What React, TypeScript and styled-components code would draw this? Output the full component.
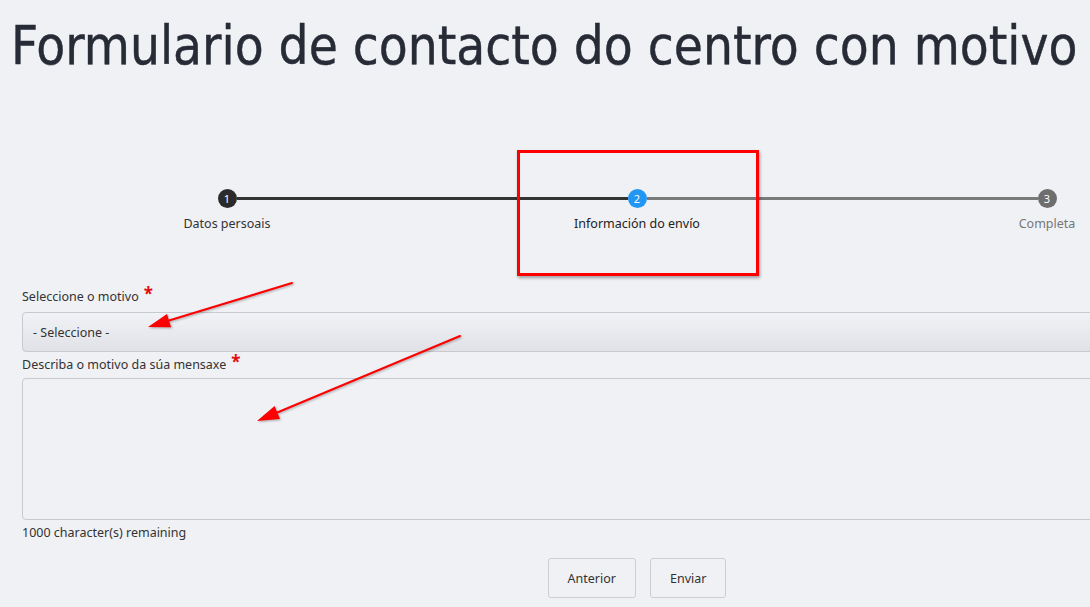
import { FC } from 'react';
import styled, { createGlobalStyle } from 'styled-components';

const GlobalStyle = createGlobalStyle`
	html, body {
		margin: 0;
		padding: 0;
		background: #f0f1f5;
		overflow: hidden;
	}
	body {
		font-family: 'Noto Sans', 'DejaVu Sans', sans-serif;
		color: #333;
	}
`;

const StyledPage = styled.div`
	position: relative;
	width: 1090px;
	height: 607px;
	overflow: hidden;
`;

const StyledTitle = styled.h1`
	margin: 0;
	padding: 14px 0 0 11px;
	font-family: 'DejaVu Sans Condensed', 'DejaVu Sans', sans-serif;
	font-stretch: condensed;
	font-weight: 400;
	font-size: 52.6px;
	line-height: 64px;
	color: #272b36;
	white-space: nowrap;
	-webkit-text-stroke: 0.4px #272b36;
`;

const StyledContainer = styled.div`
	width: 1230px;
	margin: 0 0 0 22px;
`;

const StyledStepper = styled.div`
	display: grid;
	grid-template-columns: repeat(3, 410px);
	margin-top: 111px;
	margin-left: -22px;
	padding-left: 22px;
`;

const StyledStep = styled.div`
	display: flex;
	flex-direction: column;
	align-items: center;
`;

const StyledTrack = styled.div`
	display: flex;
	align-items: center;
	width: 100%;
`;

const StyledHalf = styled.div<{ color?: string }>`
	flex: 1;
	height: 3px;
	background: ${({ color }) => color ?? 'transparent'};
`;

const StyledCircle = styled.div<{ color: string }>`
	width: 19px;
	height: 19px;
	border-radius: 50%;
	background: ${({ color }) => color};
	color: #fff;
	font-size: 11px;
	line-height: 19px;
	text-align: center;
	flex-shrink: 0;
`;

const StyledStepLabel = styled.div<{ active?: boolean; muted?: boolean }>`
	margin-top: 7px;
	font-size: 12.5px;
	line-height: 18px;
	color: ${({ muted, active }) => (muted ? '#777' : active ? '#222' : '#333')};
`;

const StyledForm = styled.div`
	margin-top: 52px;
`;

const StyledLabel = styled.label<{ gap?: number }>`
	display: block;
	margin-top: ${({ gap }) => gap ?? 0}px;
	font-size: 12.5px;
	line-height: 18px;
	color: #333;
`;

const StyledRequired = styled.span`
	color: #e01010;
	font-size: 17px;
	font-weight: 700;
	margin-left: 5px;
	vertical-align: 1px;
`;

const StyledSelect = styled.div`
	box-sizing: border-box;
	height: 40px;
	margin-top: 6px;
	padding: 0 10px;
	display: flex;
	align-items: center;
	border: 1px solid #c8c9ce;
	border-radius: 4px;
	background: linear-gradient(#f1f2f6, #e1e2e7);
	font-size: 12.5px;
	color: #333;
`;

const StyledTextarea = styled.div`
	box-sizing: border-box;
	height: 142px;
	margin-top: 4px;
	border: 1px solid #c8c9ce;
	border-radius: 4px;
	background: #f0f1f5;
`;

const StyledCounter = styled.div`
	margin-top: 5px;
	font-size: 12.5px;
	line-height: 16px;
	color: #333;
`;

const StyledActions = styled.div`
	display: flex;
	justify-content: center;
	gap: 14px;
	margin-top: 17px;
`;

const StyledButton = styled.button`
	box-sizing: border-box;
	height: 40px;
	padding: 0 19px;
	border: 1px solid #ccced3;
	border-radius: 3px;
	background: #f0f1f5;
	font-family: inherit;
	font-size: 12.5px;
	color: #333;
`;

const StyledHighlight = styled.div`
	position: absolute;
	left: 517px;
	top: 150px;
	width: 236px;
	height: 120px;
	border: 3px solid #f00;
	box-shadow: 1px 2px 3px rgba(0, 0, 0, 0.35);
`;

const StyledArrows = styled.svg`
	position: absolute;
	left: 0;
	top: 0;
	pointer-events: none;
	filter: drop-shadow(1px 1px 1px rgba(0, 0, 0, 0.3));
`;

const steps = [
	{ n: 1, label: 'Datos persoais', color: '#2b2b2b', left: undefined, right: '#333' },
	{ n: 2, label: 'Información do envío', color: '#2196f3', left: '#333', right: '#7a7a7a', active: true },
	{ n: 3, label: 'Completa', color: '#6e6e6e', left: '#7a7a7a', right: undefined, muted: true },
];

const Arrow: FC<{ x1: number; y1: number; x2: number; y2: number }> = ({ x1, y1, x2, y2 }) => {
	const a = Math.atan2(y2 - y1, x2 - x1);
	const len = 22;
	const w = 7;
	const bx = x2 - Math.cos(a) * len;
	const by = y2 - Math.sin(a) * len;
	const px = -Math.sin(a) * w;
	const py = Math.cos(a) * w;
	return (
		<g>
			<line x1={x1} y1={y1} x2={bx} y2={by} stroke="#f00" strokeWidth={2} strokeLinecap="round" />
			<polygon points={`${x2},${y2} ${bx + px},${by + py} ${bx - px},${by - py}`} fill="#f00" />
		</g>
	);
};

export default function App() {
	return (
		<StyledPage>
			<GlobalStyle />
			<StyledTitle>Formulario de contacto do centro con motivo</StyledTitle>
			<StyledContainer>
				<StyledStepper>
					{steps.map((step) => (
						<StyledStep key={step.n}>
							<StyledTrack>
								<StyledHalf color={step.left} />
								<StyledCircle color={step.color}>{step.n}</StyledCircle>
								<StyledHalf color={step.right} />
							</StyledTrack>
							<StyledStepLabel active={step.active} muted={step.muted}>
								{step.label}
							</StyledStepLabel>
						</StyledStep>
					))}
				</StyledStepper>
				<StyledForm>
					<StyledLabel>
						Seleccione o motivo<StyledRequired>*</StyledRequired>
					</StyledLabel>
					<StyledSelect>- Seleccione -</StyledSelect>
					<StyledLabel gap={1}>
						Describa o motivo da súa mensaxe<StyledRequired>*</StyledRequired>
					</StyledLabel>
					<StyledTextarea />
					<StyledCounter>1000 character(s) remaining</StyledCounter>
					<StyledActions>
						<StyledButton>Anterior</StyledButton>
						<StyledButton>Enviar</StyledButton>
					</StyledActions>
				</StyledForm>
			</StyledContainer>
			<StyledHighlight />
			<StyledArrows width={1090} height={607}>
				<Arrow x1={292} y1={283} x2={148} y2={327} />
				<Arrow x1={460} y1={336} x2={257} y2={421} />
			</StyledArrows>
		</StyledPage>
	);
}
